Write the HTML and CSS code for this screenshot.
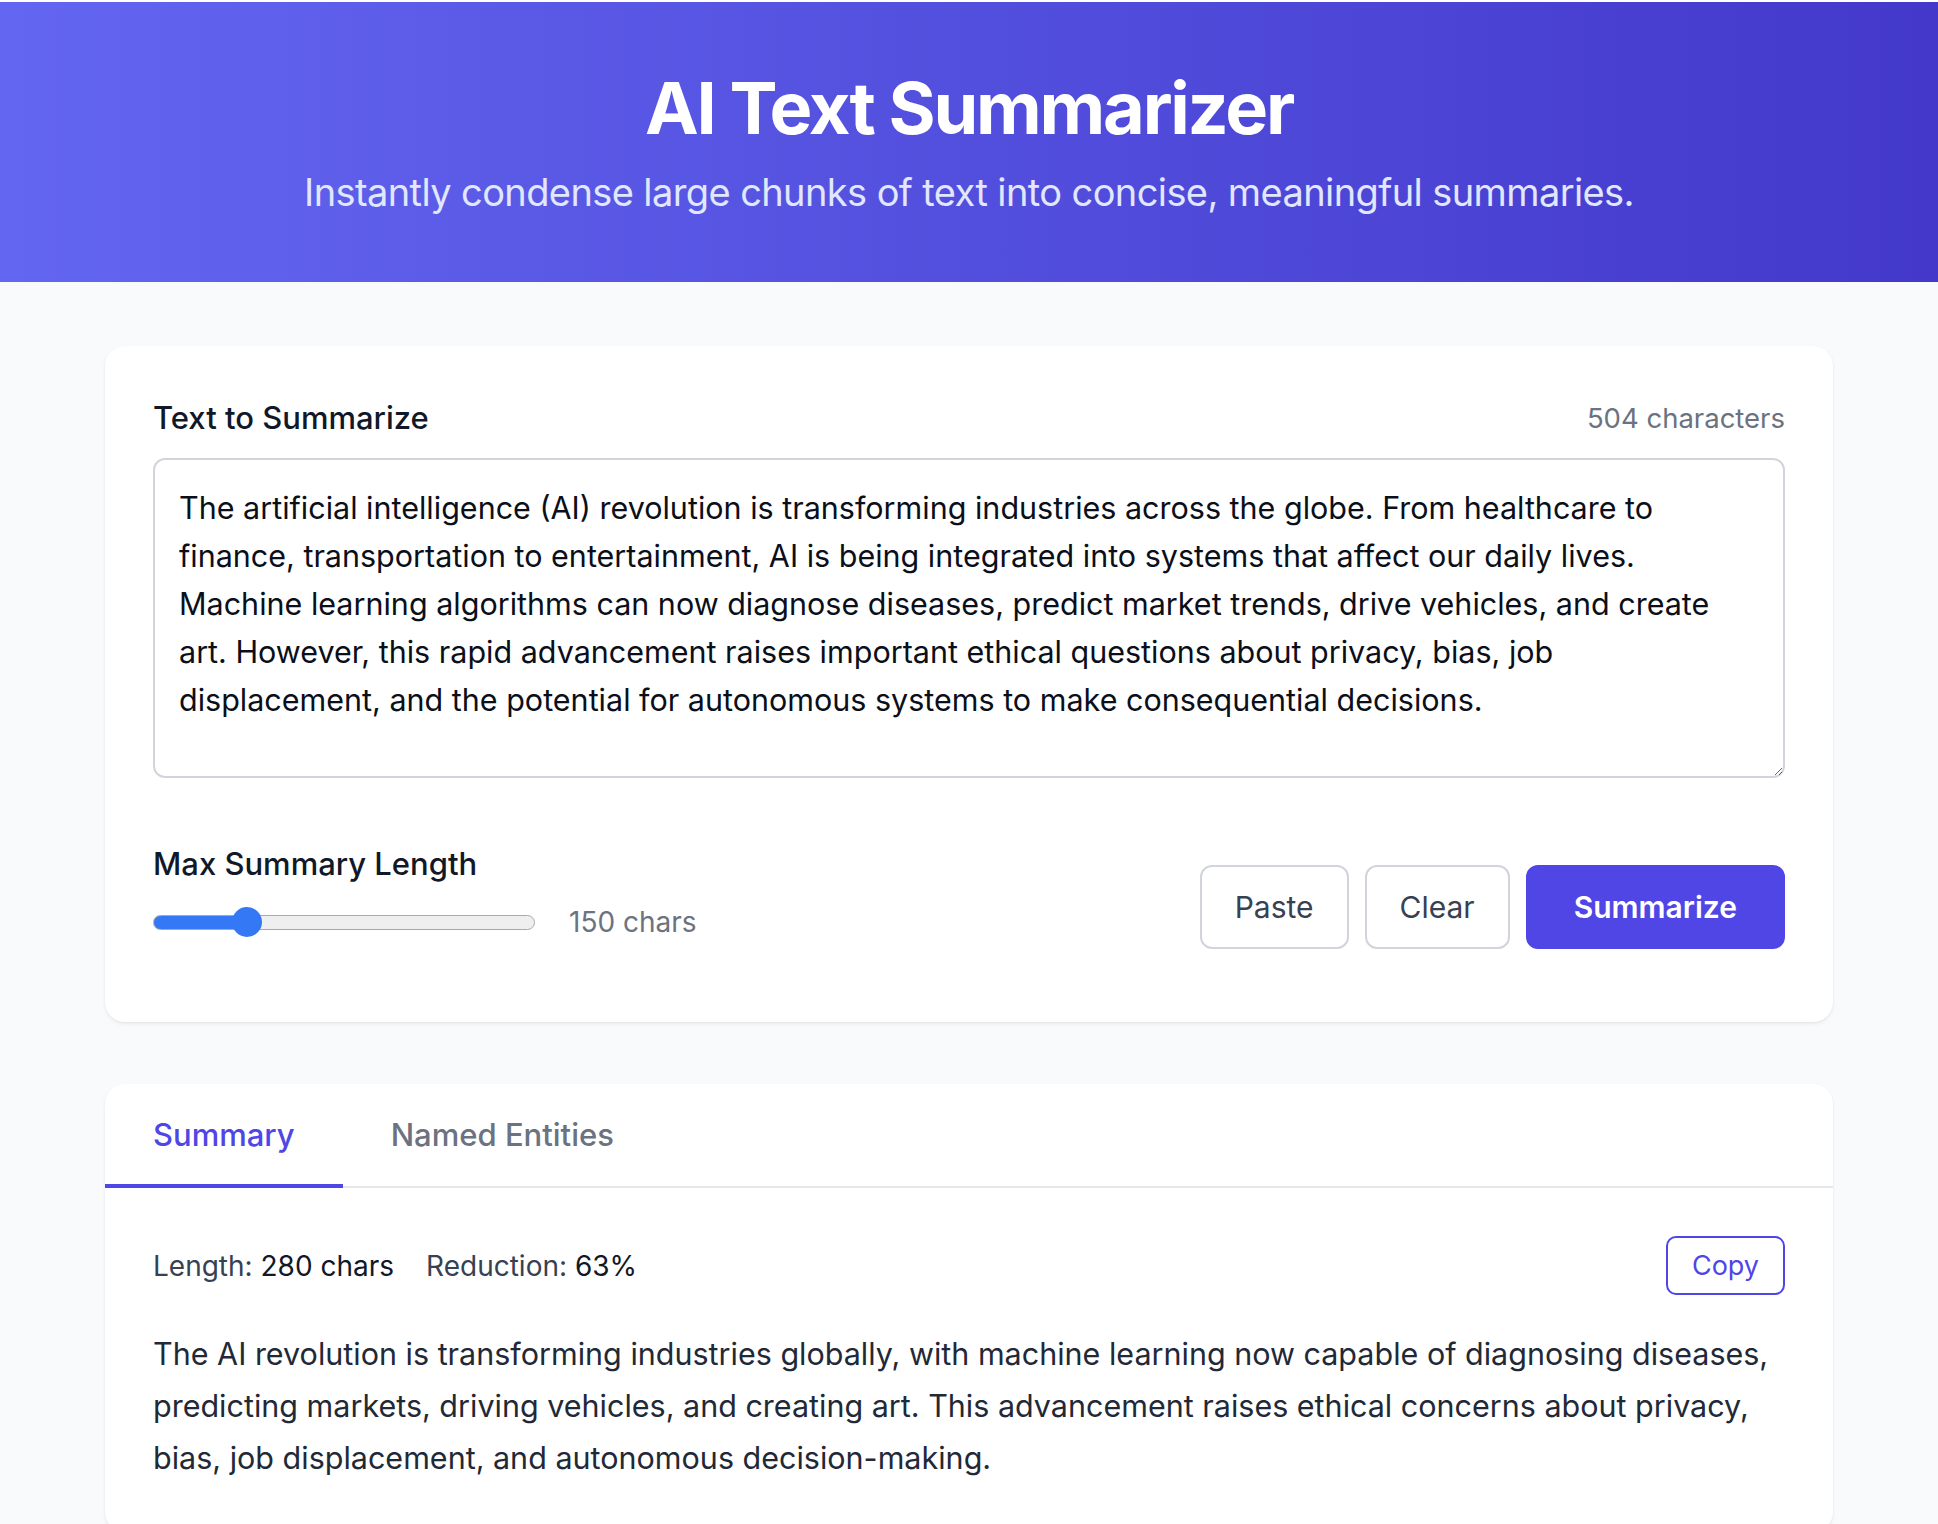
FILE: index.html
```html
<!DOCTYPE html>
<html lang="en">
<head>
<meta charset="utf-8">
<title>AI Text Summarizer</title>
<link rel="stylesheet" href="styles.css">
</head>
<body>
<header class="hero">
  <h1 class="hero-title">AI Text Summarizer</h1>
  <p class="hero-sub">Instantly condense large chunks of text into concise, meaningful summaries.</p>
</header>
<main class="container">
  <section class="card input-card">
    <div class="field-head">
      <label class="field-label" for="src">Text to Summarize</label>
      <span class="char-count">504 characters</span>
    </div>
    <textarea id="src" class="source">The artificial intelligence (AI) revolution is transforming industries across the globe. From healthcare to finance, transportation to entertainment, AI is being integrated into systems that affect our daily lives. Machine learning algorithms can now diagnose diseases, predict market trends, drive vehicles, and create art. However, this rapid advancement raises important ethical questions about privacy, bias, job displacement, and the potential for autonomous systems to make consequential decisions.</textarea>
    <div class="controls">
      <div class="length-ctl">
        <div class="field-label">Max Summary Length</div>
        <div class="range-row">
          <input class="range" type="range" min="50" max="500" value="150">
          <span class="range-val">150 chars</span>
        </div>
      </div>
      <div class="actions">
        <button class="btn btn-outline">Paste</button>
        <button class="btn btn-outline">Clear</button>
        <button class="btn btn-primary">Summarize</button>
      </div>
    </div>
  </section>
  <section class="card result-card">
    <nav class="tabs">
      <button class="tab tab-active">Summary</button>
      <button class="tab">Named Entities</button>
    </nav>
    <div class="result-body">
      <div class="result-meta">
        <div class="stats">
          <span class="stat">Length: <b>280 chars</b></span>
          <span class="stat">Reduction: <b>63%</b></span>
        </div>
        <button class="btn-copy">Copy</button>
      </div>
      <p class="summary">The AI revolution is transforming industries globally, with machine learning now capable of diagnosing diseases, predicting markets, driving vehicles, and creating art. This advancement raises ethical concerns about privacy, bias, job displacement, and autonomous decision-making.</p>
    </div>
  </section>
</main>
</body>
</html>
```

FILE: styles.css
```css
* { box-sizing: border-box; }
html, body { margin: 0; padding: 0; }
body {
  background: #f9fafb;
  font-family: Inter, "Noto Sans", "Liberation Sans", sans-serif;
  color: #111827;
  min-height: 100vh;
}
.hero {
  background: linear-gradient(90deg, #6366f1 0%, #4338ca 100%);
  color: #fff;
  text-align: center;
  padding: 66px 32px 62px;
  border-top: 2px solid #fff;
}
.hero-title {
  margin: 0 0 16px;
  font-size: 72px;
  line-height: 80px;
  font-weight: 700;
  letter-spacing: -2.2px;
}
.hero-sub {
  margin: 0;
  font-size: 38px;
  line-height: 56px;
  color: #e0e7ff;
  letter-spacing: -0.6px;
}
.container {
  max-width: 1792px;
  margin: 0 auto;
  padding: 64px 32px;
  display: flex;
  flex-direction: column;
  gap: 62px;
}
.card {
  background: #fff;
  border-radius: 20px;
  box-shadow: 0 2px 4px rgba(0,0,0,0.06), 0 1px 2px rgba(0,0,0,0.04);
}
.input-card { padding: 48px 48px 49px; }
.field-head {
  display: flex;
  justify-content: space-between;
  align-items: center;
  margin-bottom: 16px;
}
.field-label {
  font-size: 31px;
  line-height: 48px;
  font-weight: 500;
  color: #111827;
}
.char-count {
  font-size: 27.5px;
  color: #6b7280;
}
.source {
  display: block;
  width: 100%;
  height: 320px;
  border: 2px solid #d1d5db;
  border-radius: 12px;
  padding: 24px 55px 24px 24px;
  font-family: inherit;
  font-size: 30.5px;
  line-height: 48px;
  color: #0b0f19;
  resize: vertical;
}
.controls {
  display: flex;
  justify-content: space-between;
  align-items: center;
  margin-top: 62px;
}
.length-ctl { padding-bottom: 27px; }
.length-ctl .field-label { margin-bottom: 10px; }
.range-row {
  display: flex;
  align-items: center;
  gap: 34px;
  height: 48px;
}
.range {
  -webkit-appearance: none;
  appearance: none;
  width: 382px;
  height: 15px;
  margin: 0;
  border-radius: 8px;
  border: 1.5px solid #a9a9a9;
  background: linear-gradient(90deg, #3478f6 0, #3478f6 26%, #efefef 26%, #efefef 100%);
}
.range::-webkit-slider-thumb {
  -webkit-appearance: none;
  width: 30px;
  height: 30px;
  border-radius: 50%;
  background: #3478f6;
  border: none;
}
.range-val {
  font-size: 28px;
  color: #6b7280;
}
.actions {
  display: flex;
  gap: 16px;
}
.btn {
  height: 84px;
  border-radius: 12px;
  font-family: inherit;
  font-size: 30px;
  padding: 0 33px;
  cursor: pointer;
}
.btn-outline {
  background: #fff;
  border: 2px solid #d1d5db;
  color: #374151;
}
.btn-primary {
  background: #4f46e5;
  border: 2px solid #4f46e5;
  color: #fff;
  font-weight: 600;
  padding: 0 46px;
}
.tabs {
  display: flex;
  border-bottom: 2px solid #e5e7eb;
}
.tab {
  background: none;
  border: none;
  border-bottom: 4px solid transparent;
  margin-bottom: -2px;
  padding: 27px 48px 25px;
  font-family: inherit;
  font-size: 31px;
  line-height: 48px;
  font-weight: 500;
  color: #6b7280;
  cursor: pointer;
}
.tab-active {
  color: #4f46e5;
  border-bottom-color: #4f46e5;
}
.result-body { padding: 48px; }
.result-meta {
  display: flex;
  justify-content: space-between;
  align-items: center;
  margin-bottom: 33px;
}
.stats { display: flex; gap: 32px; }
.stat {
  font-size: 28px;
  color: #374151;
}
.stat b { font-weight: 400; color: #111827; }
.btn-copy {
  height: 59px;
  padding: 0 24px;
  border: 2px solid #4f46e5;
  border-radius: 10px;
  background: #fff;
  color: #4f46e5;
  font-family: inherit;
  font-size: 27px;
  cursor: pointer;
}
.summary {
  margin: 0;
  font-size: 30.5px;
  line-height: 52px;
  color: #1f2937;
}
```
